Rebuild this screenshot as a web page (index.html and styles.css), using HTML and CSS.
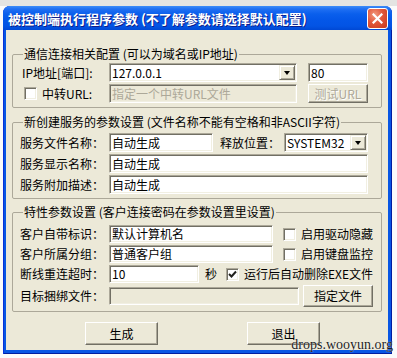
FILE: index.html
```html
<!DOCTYPE html>
<html lang="zh-CN">
<head>
    <meta charset="UTF-8">
    <title>被控制端执行程序参数</title>
    <link rel="stylesheet" href="styles.css">
</head>
<body>
    <div class="desk">
        <div class="window">
            <div class="titlebar">
                <span class="title">被控制端执行程序参数 (不了解参数请选择默认配置)</span>
                <span class="close">
                    <svg width="11" height="11" viewBox="0 0 11 11">
                        <path d="M1.5 1.5 L9.5 9.5 M9.5 1.5 L1.5 9.5" stroke="#fff" stroke-width="2.2" stroke-linecap="square"/>
                    </svg>
                </span>
            </div>

            <div class="client">
                <!-- connection settings -->
                <fieldset class="group group-net">
                    <legend>通信连接相关配置 (可以为域名或IP地址)</legend>
                    <div class="row">
                        <span class="label label-ip">IP地址[端口]:</span>
                        <div class="edit combo w-host">
                            <span class="value">127.0.0.1</span>
                            <span class="drop"></span>
                        </div>
                        <div class="edit w-port gap-11"><span class="value">80</span></div>
                    </div>
                    <div class="row">
                        <span class="label label-check">
                            <span class="checkbox"></span>
                            <span class="check-text">中转URL:</span>
                        </span>
                        <div class="edit disabled w-host"><span class="value">指定一个中转URL文件</span></div>
                        <button class="btn disabled w-port gap-11">测试URL</button>
                    </div>
                </fieldset>

                <!-- service settings -->
                <fieldset class="group group-svc">
                    <legend>新创建服务的参数设置 (文件名称不能有空格和非ASCII字符)</legend>
                    <div class="row">
                        <span class="label">服务文件名称：</span>
                        <div class="edit w-file"><span class="value">自动生成</span></div>
                        <span class="label-inline">释放位置：</span>
                        <div class="edit combo w-place">
                            <span class="value">SYSTEM32</span>
                            <span class="drop"></span>
                        </div>
                    </div>
                    <div class="row">
                        <span class="label">服务显示名称：</span>
                        <div class="edit w-full"><span class="value">自动生成</span></div>
                    </div>
                    <div class="row">
                        <span class="label">服务附加描述：</span>
                        <div class="edit w-full"><span class="value">自动生成</span></div>
                    </div>
                </fieldset>

                <!-- client settings -->
                <fieldset class="group group-opt">
                    <legend>特性参数设置 (客户连接密码在参数设置里设置)</legend>
                    <div class="row row-short">
                        <span class="label">客户自带标识：</span>
                        <div class="edit w-mid"><span class="value">默认计算机名</span></div>
                        <span class="checkbox gap-10"></span>
                        <span class="check-text">启用驱动隐藏</span>
                    </div>
                    <div class="row row-short">
                        <span class="label">客户所属分组：</span>
                        <div class="edit w-mid"><span class="value">普通客户组</span></div>
                        <span class="checkbox gap-10"></span>
                        <span class="check-text">启用键盘监控</span>
                    </div>
                    <div class="row row-short">
                        <span class="label">断线重连超时：</span>
                        <div class="edit w-time"><span class="value">10</span></div>
                        <span class="unit">秒</span>
                        <span class="checkbox checked">
                            <svg width="9" height="9" viewBox="0 0 9 9">
                                <path d="M1 4 L3.5 6.5 L8 1.5" fill="none" stroke="#21211c" stroke-width="2"/>
                            </svg>
                        </span>
                        <span class="check-text">运行后自动删除EXE文件</span>
                    </div>
                    <div class="row row-tall">
                        <span class="label">目标捆绑文件：</span>
                        <div class="edit disabled w-bind"></div>
                        <button class="btn w-pick">指定文件</button>
                    </div>
                </fieldset>

                <div class="actions">
                    <button class="btn btn-main">生成</button>
                    <button class="btn btn-main">退出</button>
                </div>
            </div>
        </div>

        <div class="watermark">drops.wooyun.org</div>
    </div>
</body>
</html>
```

FILE: styles.css
```css
body {
    margin: 0;
    font-family: "Noto Sans CJK SC", sans-serif;
    font-size: 12px;
    line-height: 14px;
    color: #000;
}

.desk {
    position: relative;
    width: 397px;
    height: 358px;
    overflow: hidden;
    background: linear-gradient(#e4e4e2 0, #e4e4e2 6px, #fbfbfb 6px);
}

.window {
    display: flex;
    flex-direction: column;
    width: 389px;
    height: 348px;
    margin: 6px 0 0 3px;
    box-sizing: border-box;
    padding-bottom: 4px;
    background: #0856e4;
    border-radius: 7px 7px 0 0;
    box-shadow: inset 1px 0 0 #0831d9, inset -1px -1px 0 #001ea0;
}

/* title bar */
.titlebar {
    display: flex;
    align-items: flex-start;
    height: 24px;
    border-radius: 7px 7px 0 0;
    background: linear-gradient(#3c8cf8 0, #1f6ff3 3px, #0a5fec 8px, #0457e8 14px, #0354e4 20px, #0048d4 24px);
}

.title {
    flex: 1;
    padding: 5px 0 0 5px;
    color: #fff;
    font-weight: bold;
    font-size: 13px;
    line-height: 15px;
    text-shadow: 1px 1px 0 #0f1f8a;
    white-space: nowrap;
}

.close {
    display: flex;
    align-items: center;
    justify-content: center;
    width: 19px;
    height: 19px;
    margin: 2px 4px 0 0;
    border: 1px solid #fff;
    border-radius: 3px;
    background: radial-gradient(circle at 35% 30%, #f29a7e 0, #e2573b 45%, #c83a1c 100%);
}

/* dialog body */
.client {
    flex: 1;
    margin: 0 4px 0 3px;
    background: #ece9d8;
    padding-top: 17px;
}

.group {
    margin: 0 6px 0 6px;
    padding: 2px 8px 4px 7px;
    border: 1px solid #aca899;
    border-radius: 2px;
    min-inline-size: 0;
}

.group legend {
    padding: 0 1px;
    margin-left: 3px;
    line-height: 14px;
    white-space: nowrap;
}

.group-svc {
    margin-top: 7px;
    padding-top: 4px;
}

.group-opt {
    margin-top: 6px;
    padding-top: 6px;
}

.row {
    display: flex;
    align-items: center;
    height: 19px;
    margin-bottom: 2px;
}

.row:last-child {
    margin-bottom: 0;
}

.row-short {
    height: 18px;
}

.row-tall {
    height: 22px;
}

.label {
    display: flex;
    align-items: center;
    width: 89px;
    flex-shrink: 0;
    white-space: nowrap;
}

.label-ip {
    padding-left: 2px;
    width: 87px;
}

.label-check .checkbox {
    margin-left: 4px;
}

.label-check .check-text {
    margin-left: 5px;
}

.label-inline {
    width: 64px;
    margin-left: 7px;
    white-space: nowrap;
}

.unit {
    margin-left: 6px;
}

/* sunken edit box */
.edit {
    display: flex;
    align-items: center;
    box-sizing: border-box;
    height: 100%;
    background: #fff;
    border: 1px solid;
    border-color: #aca899 #fff #fff #aca899;
    box-shadow: inset 1px 1px 0 #716f64, inset -1px -1px 0 #f1efe2;
    overflow: hidden;
}

.edit .value {
    flex: 1;
    padding-left: 2px;
    white-space: nowrap;
}

.edit.disabled {
    background: #ece9d8;
    color: #aca899;
}

.combo .drop {
    position: relative;
    width: 16px;
    height: 15px;
    margin-right: 1px;
    box-sizing: border-box;
    background: #ece9d8;
    border: 1px solid;
    border-color: #f1efe2 #716f64 #716f64 #f1efe2;
    box-shadow: inset 1px 1px 0 #fff, inset -1px -1px 0 #aca899;
}

.combo .drop::after {
    content: "";
    position: absolute;
    left: 4px;
    top: 5px;
    border-left: 3.5px solid transparent;
    border-right: 3.5px solid transparent;
    border-top: 4px solid #000;
}

.w-host { width: 188px; }
.w-port { width: 60px; }
.w-file { width: 104px; }
.w-place { width: 84px; }
.w-full { width: 259px; }
.w-mid { width: 164px; }
.w-time { width: 95px; }
.w-bind { width: 190px; height: 18px; }

.gap-11 { margin-left: 11px; }
.gap-10 { margin-left: 10px; }

/* raised push button */
.btn {
    box-sizing: border-box;
    padding: 0;
    font: inherit;
    color: #000;
    background: #ece9d8;
    border: 1px solid;
    border-color: #fff #716f64 #716f64 #fff;
    box-shadow: inset -1px -1px 0 #aca899;
    height: 100%;
}

.btn.disabled {
    color: #aca899;
    text-shadow: 1px 1px 0 #fff;
}

.w-pick {
    width: 70px;
    margin-left: 4px;
}

.checkbox {
    display: flex;
    align-items: center;
    justify-content: center;
    box-sizing: border-box;
    width: 13px;
    height: 13px;
    flex-shrink: 0;
    background: #fff;
    border: 1px solid;
    border-color: #aca899 #fff #fff #aca899;
    box-shadow: inset 1px 1px 0 #716f64, inset -1px -1px 0 #f1efe2;
}

.checkbox.checked {
    margin-left: 9px;
}

.check-text {
    margin-left: 5px;
    white-space: nowrap;
}

.actions {
    display: flex;
    gap: 89px;
    padding: 10px 0 0 79px;
}

.btn-main {
    width: 73px;
    height: 23px;
}

.watermark {
    position: absolute;
    right: 4px;
    bottom: 6px;
    font-family: "Liberation Serif", serif;
    font-size: 14px;
    line-height: 14px;
    color: #1e1e1e;
    text-shadow: 0 0 1px #fff;
}
```
